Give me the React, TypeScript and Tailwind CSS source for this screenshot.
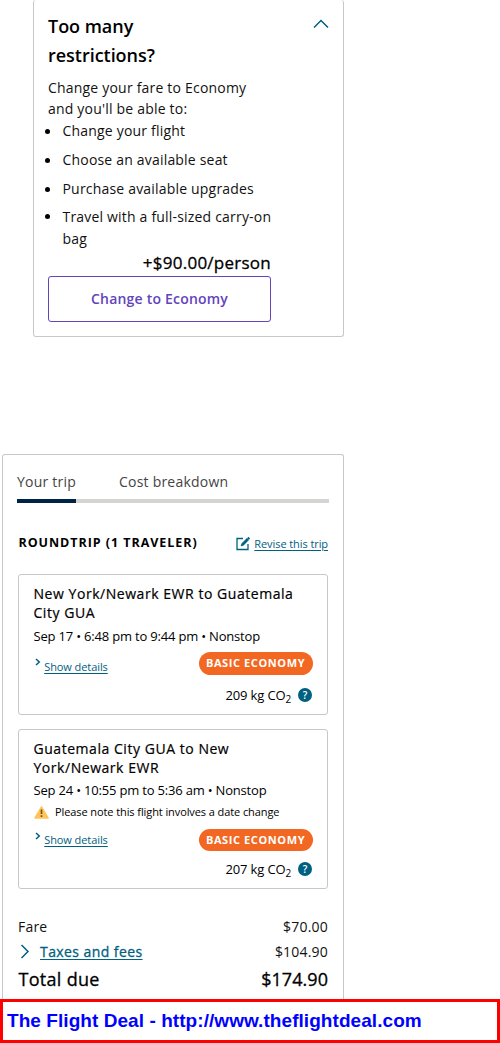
import clsx from "clsx";

const perks = [
    "Change your flight",
    "Choose an available seat",
    "Purchase available upgrades",
];

function Chevron({ points, className }: { points: string; className: string }) {
    return (
        <svg className={className} fill="none" stroke="#006080" strokeWidth="1.5">
            <polyline points={points} />
        </svg>
    );
}

function FareUpsell() {
    return (
        <section className="ml-[33px] h-[337px] w-[311px] rounded-[3px] border border-t-0 border-[#c8c8c8] pl-[14px] text-[#111]">
            <div className="flex h-[77px] justify-between pt-3">
                <h2 className="text-[18px] leading-[29px] font-semibold tracking-[-0.03px] text-black">
                    Too many
                    <br />
                    restrictions?
                </h2>
                <Chevron points="1,8.5 8,1.5 15,8.5" className="mt-[7px] mr-[14px] h-[10px] w-4" />
            </div>
            <p className="text-[14px] leading-[21px] tracking-[0.2px] whitespace-nowrap">
                Change your fare to Economy
                <br />
                and you'll be able to:
            </p>
            <ul className="mt-[1px] text-[14px] leading-[22px] tracking-[0.19px] whitespace-nowrap">
                {perks.map((perk) => (
                    <li key={perk} className="mb-[7px] flex items-center">
                        <span className="-ml-[3px] mr-[12.5px] size-[5px] rounded-full bg-black" />
                        {perk}
                    </li>
                ))}
                <li className="-mt-[1px] flex items-start">
                    <span className="-ml-[3px] mt-[8px] mr-[12.5px] size-[5px] rounded-full bg-black" />
                    <span>
                        Travel with a full-sized carry-on
                        <br />
                        bag
                    </span>
                </li>
            </ul>
            <div className="w-[223px]">
                <p className="h-[26px] text-right text-[17px] leading-[25px] tracking-[0.25px] whitespace-nowrap text-black [-webkit-text-stroke:0.3px]">
                    +$90.00/person
                </p>
                <button className="h-[46px] w-full rounded-[3px] border border-[#6244bb] pb-[2px] text-[14px] font-semibold tracking-[0.2px] text-[#6244bb]">
                    Change to Economy
                </button>
            </div>
        </section>
    );
}

type Flight = {
    title: [string, string];
    when: string;
    co2: string;
    note?: string;
};

const flights: Flight[] = [
    {
        title: ["New York/Newark EWR to Guatemala", "City GUA"],
        when: "Sep 17 • 6:48 pm to 9:44 pm • Nonstop",
        co2: "209",
    },
    {
        title: ["Guatemala City GUA to New", "York/Newark EWR"],
        when: "Sep 24 • 10:55 pm to 5:36 am • Nonstop",
        co2: "207",
        note: "Please note this flight involves a date change",
    },
];

function FlightCard({ flight }: { flight: Flight }) {
    return (
        <article
            className={clsx(
                "rounded-[3px] border border-[#c8c8c8] pt-[9px] pr-[14px] pl-[14.5px] whitespace-nowrap text-black",
                flight.note ? "h-[160px]" : "h-[141px]",
            )}
        >
            <h3 className="text-[14px] leading-[19px] tracking-[0.54px] [-webkit-text-stroke:0.2px]">
                {flight.title[0]}
                <br />
                {flight.title[1]}
            </h3>
            <p className={clsx("text-[13px] leading-[20px] tracking-[-0.19px]", flight.note ? "mt-[3px]" : "mt-[4px]")}>
                {flight.when}
            </p>
            {flight.note && (
                <div className="mt-[1px] flex h-[22px] items-center text-[11px] tracking-[-0.09px]">
                    <svg className="mr-[6.5px] h-[13px] w-[15px]" viewBox="0 0 15 13">
                        <path d="M7.5 1 14 12H1Z" fill="#ffc558" stroke="#ffc558" strokeWidth="1.5" strokeLinejoin="round" />
                        <path d="M7.5 3.5v4.5M7.5 9.3v1.7" stroke="#715119" strokeWidth="1.6" />
                    </svg>
                    {flight.note}
                </div>
            )}
            <div className="mt-[6px] flex justify-between">
                <a className="flex text-[11px] leading-[16px] tracking-[-0.08px] text-[#006080]">
                    <Chevron
                        points="2,1 5.3,4 2,7"
                        className={clsx("mr-[3.7px] h-2 w-[7px]", flight.note ? "mt-[3px]" : "mt-[6px]")}
                    />
                    <span className={clsx("underline underline-offset-2", flight.note ? "mt-[3px]" : "mt-[7px]")}>
                        Show details
                    </span>
                </a>
                <span
                    className={clsx(
                        "flex w-[114px] items-center justify-center rounded-full bg-[#f26722] pr-[1px] text-[11px] font-bold tracking-[0.6px] text-white",
                        flight.note ? "h-[22px]" : "h-[23px]",
                    )}
                >
                    BASIC ECONOMY
                </span>
            </div>
            <div
                className={clsx(
                    "flex items-center justify-end text-[13px] leading-[20px] tracking-[-0.15px]",
                    flight.note ? "mt-[8px]" : "mt-[10px]",
                )}
            >
                <span>
                    {flight.co2} kg CO<sub className="text-[10px]">2</sub>
                </span>
                <span className="mr-[1px] ml-[7px] flex size-[14px] items-center justify-center rounded-full bg-[#006080] text-[10px] font-semibold text-white">
                    ?
                </span>
            </div>
        </article>
    );
}

function TripSummary() {
    return (
        <section className="mt-[117px] ml-[2px] h-[545px] w-[342px] rounded-t-[3px] border border-b-0 border-[#c8c8c8] px-[14px]">
            <div className="flex h-[48px] w-[312px] border-b-4 border-[#d4d4d1] pt-[16px] text-[14px] leading-[22px] tracking-[0.22px] whitespace-nowrap text-[#444]">
                <div className="h-[32px] w-[59px] border-b-4 border-[#002244]">Your trip</div>
                <div className="ml-[43px]">Cost breakdown</div>
            </div>
            <div className="pr-[1px] pl-[1px]">
                <div className="flex h-[71px] items-center justify-between whitespace-nowrap">
                    <h2 className="mt-[10px] ml-[0.5px] text-[12.5px] font-bold tracking-[0.95px] text-black">
                        ROUNDTRIP (1 TRAVELER)
                    </h2>
                    <a className="mt-[11px] flex items-center text-[11px] leading-[16px] tracking-[-0.08px] text-[#006080]">
                        <svg className="mr-[4px] mb-[1px] h-[15px] w-[14px]" viewBox="0 0 14 15" fill="none" stroke="#006080">
                            <path d="M7 2.5H1v11h11V8" strokeWidth="1.3" />
                            <path d="M5 10 5.6 7.7 11 2.3l1.7 1.7-5.4 5.4Z" fill="#006080" strokeWidth=".5" />
                            <path d="m11.8 1.5 1.7 1.7" strokeWidth="1.8" />
                        </svg>
                        <span className="underline underline-offset-2">Revise this trip</span>
                    </a>
                </div>
                <div className="flex flex-col gap-[14px]">
                    {flights.map((flight) => (
                        <FlightCard key={flight.co2} flight={flight} />
                    ))}
                </div>
                <dl className="mt-[25px] text-[14px] leading-[26px] tracking-[0.2px] text-[#111]">
                    <div className="flex h-[25px] justify-between">
                        <dt>Fare</dt>
                        <dd>$70.00</dd>
                    </div>
                    <div className="flex h-[26px] justify-between">
                        <dt className="flex tracking-[0.42px] text-[#006080] [-webkit-text-stroke:0.3px]">
                            <Chevron points="3.5,1 10,7.5 3.5,14" className="mt-[5px] mr-[10px] h-[15px] w-3" />
                            <span className="underline underline-offset-2">Taxes and fees</span>
                        </dt>
                        <dd>$104.90</dd>
                    </div>
                    <div className="flex h-[28px] justify-between text-[18px] leading-[28px] text-black [-webkit-text-stroke:0.3px]">
                        <dt className="ml-[0.5px] tracking-[0.3px]">Total due</dt>
                        <dd className="tracking-[0.05px]">$174.90</dd>
                    </div>
                </dl>
            </div>
        </section>
    );
}

export default function App() {
    return (
        <main className="h-[1043px] w-[500px] overflow-hidden bg-white font-['Open_Sans',sans-serif]">
            <FareUpsell />
            <TripSummary />
            <footer className="flex h-[44px] items-center border-[3px] border-[#ff0000] pl-[4px] font-['Liberation_Sans',Arial,sans-serif] text-[19px] font-bold tracking-[0.06px] whitespace-nowrap text-[#0000ff]">
                The Flight Deal - http://www.theflightdeal.com
            </footer>
        </main>
    );
}
